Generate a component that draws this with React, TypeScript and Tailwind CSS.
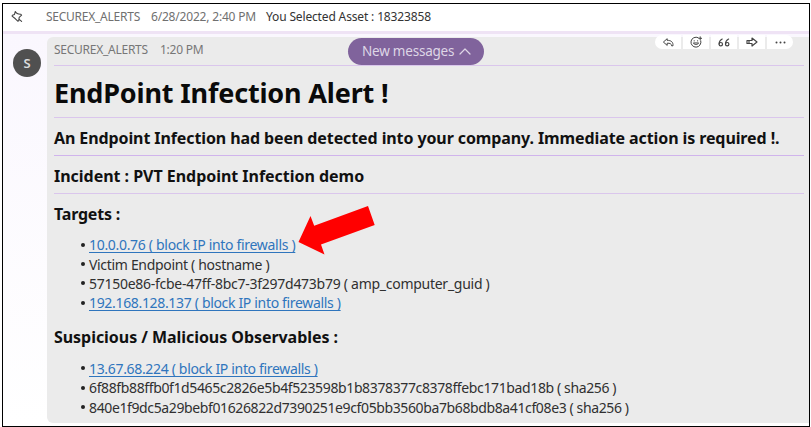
import type { ReactNode } from "react";

function Bullet({ children, link, tracking }: { children: ReactNode; link?: boolean; tracking: string }) {
  return (
    <li className="flex h-[19.4px] items-center text-[14px] leading-[19px] text-[#303030]">
      <span className="mr-[4px] size-[4px] shrink-0 rounded-full bg-[#222]" />
      {link ? (
        <a className={`text-[#2f75bd] underline decoration-1 underline-offset-2 ${tracking}`}>{children}</a>
      ) : (
        <span className={tracking}>{children}</span>
      )}
    </li>
  );
}

function Rule({ strong }: { strong?: boolean }) {
  return <div className={`mr-[5px] h-px ${strong ? "bg-[#d0b4ec]" : "bg-[#dac6ec]"}`} />;
}

function Action({ children, className = "" }: { children: ReactNode; className?: string }) {
  return (
    <button className={`flex h-[14px] w-[26px] items-center justify-center bg-white text-[#444] ${className}`}>
      {children}
    </button>
  );
}

const stroke = { fill: "none", stroke: "currentColor", strokeWidth: 1, strokeLinejoin: "round" as const, strokeLinecap: "round" as const };

export default function App() {
  return (
    <div className="h-[427px] w-[811px] overflow-hidden bg-white pl-[2px] pt-[3px] font-['Noto_Sans','Open_Sans',sans-serif] whitespace-nowrap">
      <div className="relative flex h-[424px] w-[808px] flex-col border border-black bg-white">
        <header className="flex h-[27px] shrink-0 items-center pb-px pl-[7px] text-[12px] leading-none text-[#707070]">
          <svg className="mr-[22px] size-[14px] text-[#444]" viewBox="0 0 14 14" {...stroke} strokeWidth={1.1}>
            <path d="M5.3 1.5C6.1 3.3 8 4.3 10.9 4.2L11.6 5.2 9.2 7.4 8.7 10.8 7.8 11.2 5.4 8.8 2.1 6.1 2.4 5.2 4.5 4.4Z M9.2 9.3 11.6 11.4" />
          </svg>
          <span className="w-[105px] tracking-[-0.25px]">SECUREX_ALERTS</span>
          <span className="w-[115px] tracking-[-0.19px]">6/28/2022, 2:40 PM</span>
          <span className="tracking-[-0.15px] text-[#333]">You Selected Asset : 18323858</span>
        </header>
        <div className="h-[3px] shrink-0 bg-[#efe3f5]" />
        <main className="flex h-[389px] bg-linear-to-b from-[#faf7fe] to-white pt-[3px]">
          <div className="w-[44px] shrink-0 pl-[10px] pt-[12px]">
            <div className="flex size-[28px] items-center justify-center rounded-full bg-[#505050] pt-px text-[13px] font-semibold text-[#ddd]">S</div>
          </div>
          <section className="h-[386px] flex-1 rounded-l-[6px] bg-[#ebebeb] pl-[7px]">
            <div className="flex h-[28px] items-center pb-[3px] text-[12px] leading-none text-[#777]">
              <span className="w-[106px] tracking-[-0.26px]">SECUREX_ALERTS</span>
              <span className="tracking-[-0.25px]">1:20 PM</span>
            </div>
            <Rule />
            <h1 className="flex h-[51px] items-center pt-[2px] text-[27px] font-bold leading-none text-[#0a0a0a]">
              <span className="tracking-[-0.17px]">EndPoint Infection Alert !</span>
            </h1>
            <Rule />
            <h2 className="flex h-[37px] items-center pt-[2px] text-[16px] font-bold leading-none text-[#111]">
              <span className="tracking-[-0.1px]">An Endpoint Infection had been detected into your company. Immediate action is required !.</span>
            </h2>
            <Rule strong />
            <h2 className="flex h-[37px] items-center pt-[2px] text-[16px] font-bold leading-none text-[#111]">
              <span className="tracking-[-0.03px]">Incident : PVT Endpoint Infection demo</span>
            </h2>
            <Rule />
            <h3 className="flex h-[41px] items-center pb-[2px] text-[16px] font-bold leading-none text-[#111]">
              <span className="tracking-[-0.2px]">Targets :</span>
            </h3>
            <ul className="pl-[27px]">
              <Bullet link tracking="tracking-[-0.31px]">10.0.0.76 ( block IP into firewalls )</Bullet>
              <Bullet tracking="tracking-[-0.32px]">Victim Endpoint ( hostname )</Bullet>
              <Bullet tracking="tracking-[-0.27px]">57150e86-fcbe-47ff-8bc7-3f297d473b79 ( amp_computer_guid )</Bullet>
              <Bullet link tracking="tracking-[-0.33px]">192.168.128.137 ( block IP into firewalls )</Bullet>
            </ul>
            <h3 className="flex h-[46px] items-center pt-[2px] text-[16px] font-bold leading-none text-[#111]">
              <span className="tracking-[-0.05px]">Suspicious / Malicious Observables :</span>
            </h3>
            <ul className="pl-[27px]">
              <Bullet link tracking="tracking-[-0.33px]">13.67.68.224 ( block IP into firewalls )</Bullet>
              <Bullet tracking="tracking-[-0.375px]">6f88fb88ffb0f1d5465c2826e5b4f523598b1b8378377c8378ffebc171bad18b ( sha256 )</Bullet>
              <Bullet tracking="tracking-[-0.38px]">840e1f9dc5a29bebf01626822d7390251e9cf05bb3560ba7b68bdb8a41cf08e3 ( sha256 )</Bullet>
            </ul>
          </section>
        </main>

        <button className="absolute left-[345px] top-[34px] flex h-[27px] w-[136px] items-center rounded-full bg-[#80639c] pl-[14px] text-left text-[13.5px] leading-none text-[#ded6e6]">
          <span className="w-[97px] tracking-[-0.22px]">New messages</span>
          <svg className="h-[7px] w-[12px]" viewBox="0 0 12 7" {...stroke} strokeWidth={1.2}><path d="m1 6 5-5 5 5" /></svg>
        </button>

        <div className="absolute left-[652px] top-[31px] flex gap-[2px]">
          <Action className="rounded-l-full">
            <svg className="h-[9px] w-[11px]" viewBox="0 0 11 9" {...stroke}>
              <path d="M.7 3.8 4.2.7V2.4C8 2.2 10.3 4 10 7.8H8.6C8.4 5.7 7 5.1 4.2 5.2V7Z" />
            </svg>
          </Action>
          <Action>
            <svg className="size-[12px]" viewBox="0 0 12 12" {...stroke}>
              <path d="M8.1 1.6A5 5 0 1 0 10.8 4.8M10.2.8v3M8.7 2.3h3" />
              <path d="M3.5 7.3c1 1.7 4 1.7 5 0ZM4.2 4.7v.3M7.6 4.7v.3" />
            </svg>
          </Action>
          <Action>
            <svg className="h-[9px] w-[12px]" viewBox="0 0 12 9" {...stroke} strokeWidth={1.2}>
              <path d="M4.2 1Q1.1 2.4 1.1 6M10.6 1Q7.5 2.4 7.5 6" />
              <circle cx="2.8" cy="6.2" r="1.7" /><circle cx="9.2" cy="6.2" r="1.7" />
            </svg>
          </Action>
          <Action>
            <svg className="h-[10px] w-[12px]" viewBox="0 0 12 10" {...stroke} strokeWidth={1.2}>
              <path d="M1 3.5H6V1L11 5 6 9V6.5H1ZM3 3.5v3" />
            </svg>
          </Action>
          <Action className="rounded-r-full">
            <svg className="h-[3px] w-[11px]" viewBox="0 0 11 3" fill="currentColor">
              <circle cx="1.5" cy="1.5" r="1" /><circle cx="5.5" cy="1.5" r="1" /><circle cx="9.5" cy="1.5" r="1" />
            </svg>
          </Action>
        </div>

        <svg className="absolute left-[295px] top-[201px] h-[50px] w-[78px]" viewBox="298 205 78 50" fill="#ff0000">
          <path d="M298.5 242 310.5 216 314.2 225.8 368 206 374.7 225 321 244.5 324.5 254.5Z" />
        </svg>
      </div>
    </div>
  );
}
